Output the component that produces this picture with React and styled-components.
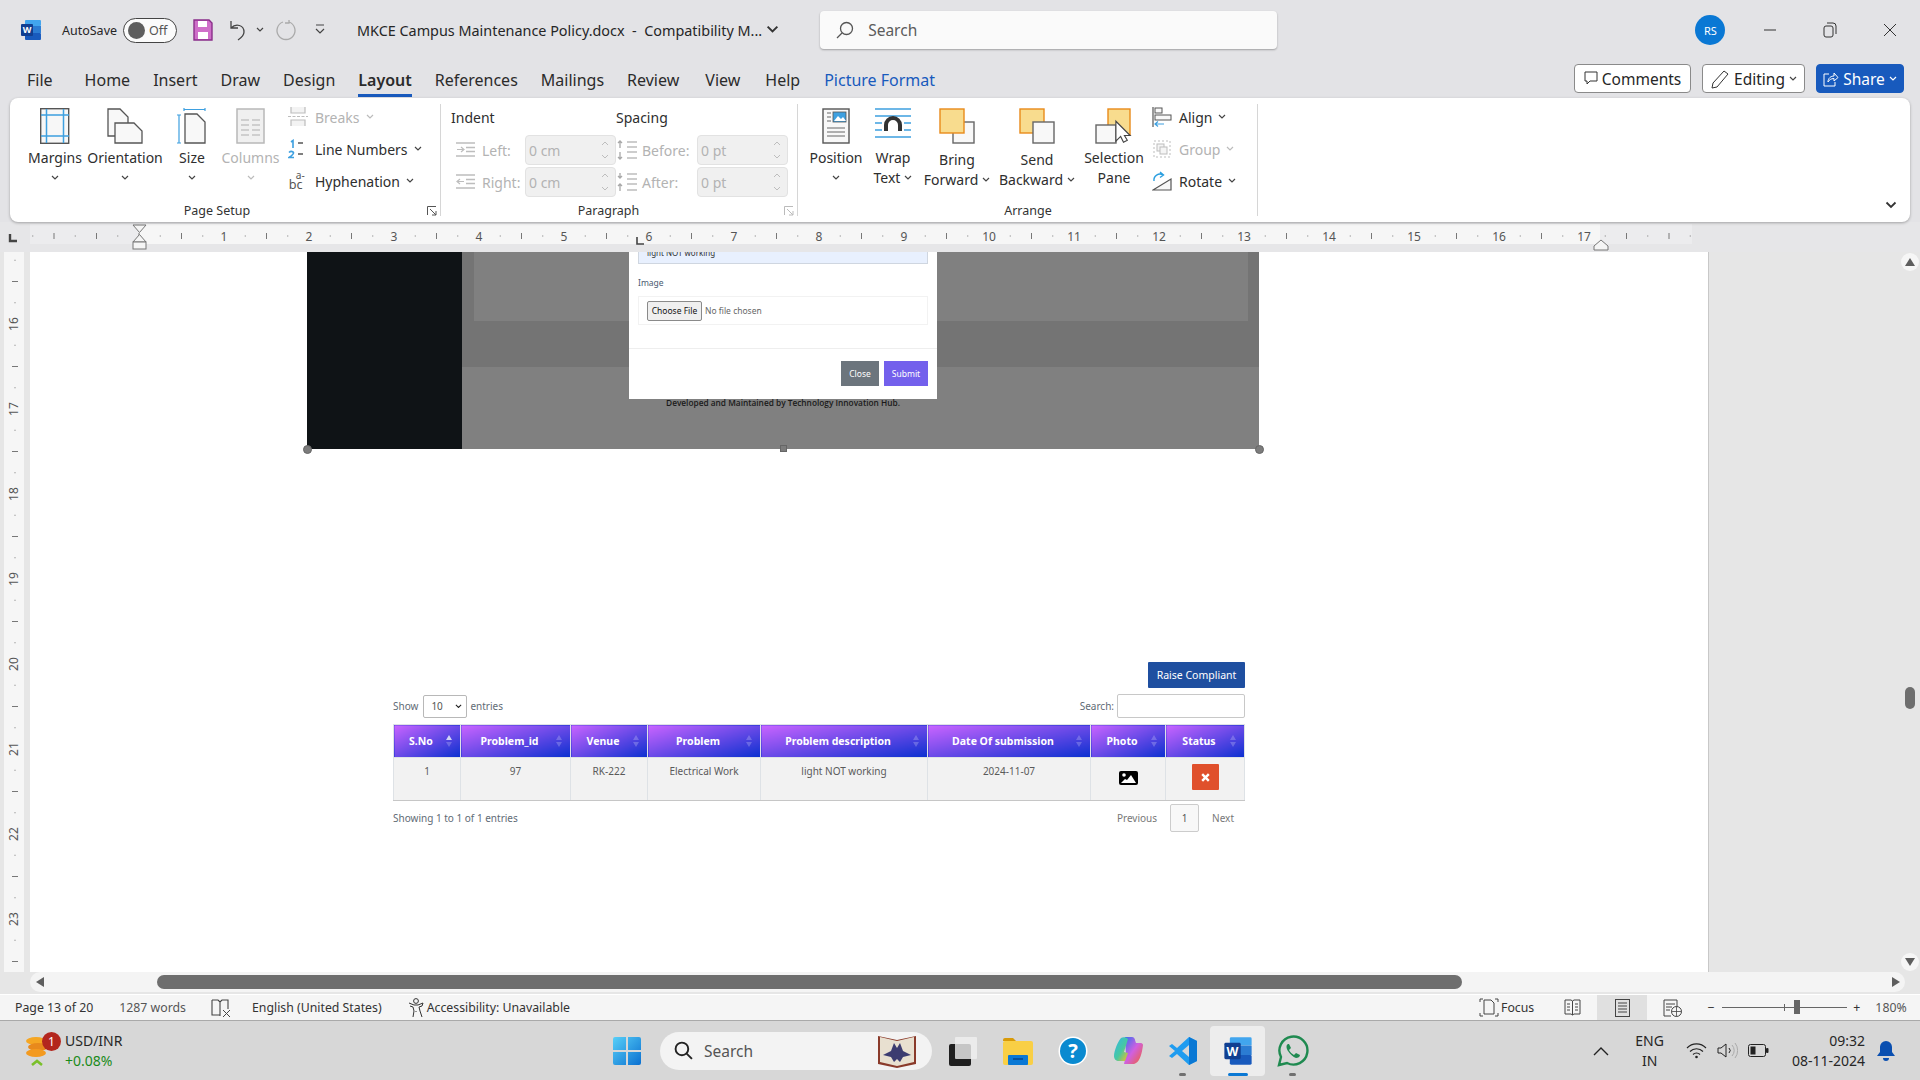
import React from 'react'
import styled, { createGlobalStyle } from 'styled-components'

const GlobalStyle = createGlobalStyle`
  html, body { margin: 0; padding: 0; background: #e3e3e6; }
  * { box-sizing: border-box; }
  #root { width: 1920px; height: 1080px; overflow: hidden; }
`

const UI = `"Noto Sans", "Open Sans", sans-serif`

const Window = styled.div`
  width: 1920px;
  height: 1080px;
  display: flex;
  flex-direction: column;
  font-family: ${UI};
  color: #262626;
  background: #e3e3e6;
`

/* ---------- title bar ---------- */
const TitleBar = styled.div`
  height: 60px;
  flex: none;
  display: flex;
  align-items: center;
  padding: 0 0 0 20px;
  position: relative;
`
const TitleItem = styled.div`
  display: flex;
  align-items: center;
  margin-left: ${p => p.$ml || 0}px;
  font-size: ${p => p.$size || 14}px;
  white-space: nowrap;
`
const Toggle = styled.div`
  width: 54px;
  height: 25px;
  border: 1px solid #444;
  border-radius: 13px;
  background: #fbfbfb;
  display: flex;
  align-items: center;
  padding-left: 4px;
  gap: 4px;
  font-size: 12.5px;
  color: #555;
  margin-left: 6px;
  &::before {
    content: '';
    width: 17px;
    height: 17px;
    border-radius: 50%;
    background: #5e5e5e;
  }
`
const SearchBox = styled.div`
  width: 458px;
  height: 38px;
  background: #fafafa;
  border-radius: 4px;
  box-shadow: 0 1px 2px rgba(0, 0, 0, .3);
  display: flex;
  align-items: center;
  gap: 14px;
  padding-left: 16px;
  font-size: 15.5px;
  color: #5c5c5c;
  margin-left: 41px;
`
const Avatar = styled.div`
  width: 30px;
  height: 30px;
  border-radius: 50%;
  background: #0a78d4;
  color: #fff;
  font-size: 11px;
  display: flex;
  align-items: center;
  justify-content: center;
  margin-left: 418px;
`
const WinBtn = styled.div`
  width: 60px;
  display: flex;
  justify-content: center;
  margin-left: ${p => p.$first ? 15 : 0}px;
`

/* ---------- tabs ---------- */
const TabRow = styled.div`
  height: 38px;
  flex: none;
  display: flex;
  align-items: flex-start;
  padding: 3px 16px 0 27px;
`
const Tab = styled.div`
  position: relative;
  height: 33px;
  line-height: 34px;
  font-size: 16px;
  margin-right: ${p => p.$mr ?? 23}px;
  color: ${p => p.$accent ? '#185abd' : '#2b2b2b'};
  font-weight: ${p => p.$active ? 600 : 400};
  ${p => p.$active && `
    &::after {
      content: '';
      position: absolute;
      left: 0;
      right: 0;
      bottom: -1px;
      height: 3px;
      background: #185abd;
    }
  `}
`
const TabActions = styled.div`
  margin-left: auto;
  display: flex;
  gap: 11px;
  padding-top: 1px;
`
const ActionBtn = styled.div`
  height: 29px;
  width: ${p => p.$w}px;
  border-radius: 4px;
  border: 1px solid ${p => p.$primary ? '#185abd' : '#8a8a8a'};
  background: ${p => p.$primary ? '#185abd' : '#fff'};
  color: ${p => p.$primary ? '#fff' : '#262626'};
  display: flex;
  align-items: center;
  justify-content: center;
  gap: 4px;
  font-size: 15.5px;
`

/* ---------- ribbon ---------- */
const Ribbon = styled.div`
  height: 124px;
  flex: none;
  margin: 0 10px;
  background: #fff;
  border-radius: 8px;
  box-shadow: 0 1px 3px rgba(0, 0, 0, .3);
  display: flex;
  position: relative;
  z-index: 2;
`
const Group = styled.div`
  width: ${p => p.$w}px;
  position: relative;
  padding: ${p => p.$pad || '0'};
  display: flex;
  align-items: flex-start;
  &::after {
    content: '';
    position: absolute;
    right: 0;
    top: 6px;
    bottom: 6px;
    width: 1px;
    background: #d6d6d6;
  }
`
const GroupLabel = styled.div`
  position: absolute;
  left: 0;
  right: ${p => p.$right ?? 0}px;
  bottom: 3px;
  text-align: center;
  font-size: 12.5px;
  color: #333;
`
const Launcher = styled.div`
  position: absolute;
  right: 4px;
  bottom: 6px;
  display: flex;
`
const LargeBtn = styled.div`
  width: ${p => p.$w}px;
  flex: none;
  display: flex;
  flex-direction: column;
  align-items: center;
  padding-top: 10px;
  color: ${p => p.$off ? '#b3b3b3' : '#2e2e2e'};
  font-size: 14px;
  line-height: 20px;
`
const IconSlot = styled.div`
  height: 37px;
  display: flex;
  align-items: flex-start;
  justify-content: center;
  margin-bottom: ${p => p.$mb ?? 3}px;
`
const LabelLine = styled.div`
  white-space: nowrap;
  height: 20px;
  display: flex;
  align-items: center;
  justify-content: center;
  gap: 4px;
`
const SmallCol = styled.div`
  display: flex;
  flex-direction: column;
  gap: 6px;
  padding-top: 6px;
  margin-left: ${p => p.$ml || 0}px;
`
const SmallBtn = styled.div`
  height: 26px;
  display: flex;
  align-items: center;
  gap: 6px;
  font-size: 14px;
  white-space: nowrap;
  color: ${p => p.$off ? '#b3b3b3' : '#2e2e2e'};
`
const SmallIcon = styled.div`
  width: 22px;
  display: flex;
  justify-content: center;
`
const ParaGrid = styled.div`
  display: grid;
  grid-template-columns: 165px 175px;
  padding: 10px 0 0 10px;
  row-gap: 2px;
`
const ParaHead = styled.div`
  font-size: 14px;
  height: 25px;
  color: #2e2e2e;
`
const ParaRow = styled.div`
  display: flex;
  align-items: center;
  height: 30px;
  color: #b3b3b3;
  font-size: 14px;
  padding-left: ${p => p.$pl ?? 5}px;
`
const ParaIcon = styled.div`
  width: 26px;
  display: flex;
`
const ParaName = styled.div`
  width: ${p => p.$w}px;
`
const Spin = styled.div`
  width: 91px;
  height: 30px;
  background: #f0f0f0;
  border: 1px solid #e2e2e2;
  border-radius: 4px;
  display: flex;
  align-items: center;
  justify-content: space-between;
  padding: 0 6px 0 3px;
  font-size: 14px;
`
const Collapse = styled.div`
  position: absolute;
  right: 13px;
  bottom: 13px;
  display: flex;
`

/* ---------- ruler ---------- */
const RulerBar = styled.div`
  height: 30px;
  flex: none;
  background: #e6e6e8;
  display: block;
`

/* ---------- document ---------- */
const DocArea = styled.div`
  height: 720px;
  flex: none;
  display: flex;
  background: #e6e6e6;
  overflow: hidden;
`
const VRuler = styled.div`
  width: 30px;
  flex: none;
  overflow: hidden;
`
const Page = styled.div`
  width: 1679px;
  flex: none;
  background: #fff;
  border-right: 1px solid #c8c8c8;
  padding-left: 277px;
`
const Gutter = styled.div`
  flex: 1;
`
const VScroll = styled.div`
  width: 20px;
  flex: none;
  position: relative;
  display: flex;
  flex-direction: column;
  justify-content: space-between;
  align-items: center;
  padding: 1px 0 1px;
`
const ScrollThumb = styled.div`
  position: absolute;
  left: 5px;
  top: 435px;
  width: 10px;
  height: 22px;
  border-radius: 5px;
  background: #6e6e6e;
`
const ArrowBtn = styled.div`
  width: 18px;
  height: 18px;
  border-radius: 50%;
  background: #f6f6f6;
  display: flex;
  align-items: center;
  justify-content: center;
`

/* picture pasted in the page */
const Picture = styled.div`
  width: 952px;
  height: 197px;
  display: flex;
  position: relative;
  background: #808080;
`
const DarkSide = styled.div`
  width: 155px;
  background: #0f1316;
  flex: none;
`
const PicMain = styled.div`
  flex: 1;
  display: flex;
  flex-direction: column;
`
const PicBand = styled.div`
  height: 115px;
  background: #747474;
  padding: 0 11px 0 12px;
`
const PicCard = styled.div`
  height: 69px;
  background: #808080;
`
const PicFoot = styled.div`
  flex: 1;
  text-align: center;
  font-size: 8.3px;
  font-weight: 600;
  color: #1a1a1a;
  padding: 30px 155px 0 0;
  font-family: "Open Sans", sans-serif;
`
const Modal = styled.div`
  position: absolute;
  left: 322px;
  top: 0;
  width: 308px;
  height: 147px;
  background: #fff;
  display: flex;
  flex-direction: column;
  padding: 0 9px;
`
const FilledInput = styled.div`
  height: 12px;
  margin-top: 0;
  background: #e8f0fe;
  border: 1px solid #cfd6e0;
  border-top: none;
  overflow: hidden;
  font-size: 8px;
  line-height: 1px;
  color: #333;
  padding-left: 8px;
`
const ModalLabel = styled.div`
  font-size: 8.5px;
  color: #4a5a70;
  margin-top: 13px;
  height: 18px;
`
const FileBox = styled.div`
  height: 29px;
  margin-top: 1px;
  border: 1px solid #f2f2f2;
  display: flex;
  align-items: center;
  padding-left: 8px;
  gap: 3px;
  font-size: 8.5px;
  color: #666;
  white-space: nowrap;
`
const ChooseBtn = styled.div`
  width: 55px;
  height: 20px;
  background: #efefef;
  border: 1px solid #8a8a8a;
  border-radius: 2px;
  color: #111;
  display: flex;
  align-items: center;
  justify-content: center;
`
const ModalFoot = styled.div`
  margin: 23px -9px 0;
  border-top: 1px solid #eee;
  padding: 12px 9px 0;
  display: flex;
  justify-content: flex-end;
  gap: 5px;
`
const ModalBtn = styled.div`
  width: ${p => p.$w}px;
  height: 25px;
  background: ${p => p.$bg};
  color: #fff;
  font-size: 8.5px;
  display: flex;
  align-items: center;
  justify-content: center;
`
const Handle = styled.div`
  position: absolute;
  top: 193px;
  left: ${p => p.$x};
  width: ${p => p.$square ? 7 : 9}px;
  height: ${p => p.$square ? 7 : 9}px;
  margin-left: ${p => p.$square ? -3 : -4}px;
  border-radius: ${p => p.$square ? '0' : '50%'};
  background: #7c7c7c;
  border: 1px solid #666;
`

/* complaints table pasted in the page */
const TableBlock = styled.div`
  width: 852px;
  margin: 213px 0 0 86px;
  font-family: "Noto Sans", sans-serif;
  font-size: 10px;
  color: #5f6b76;
`
const RaiseRow = styled.div`
  display: flex;
  justify-content: flex-end;
`
const RaiseBtn = styled.div`
  width: 97px;
  height: 26px;
  background: #1f4fa0;
  color: #fff;
  border-radius: 1px;
  display: flex;
  align-items: center;
  justify-content: center;
  font-size: 10.5px;
`
const ControlRow = styled.div`
  display: flex;
  align-items: center;
  justify-content: space-between;
  height: 24px;
  margin-top: 6px;
`
const ControlGroup = styled.div`
  display: flex;
  align-items: center;
  gap: 3px;
`
const SelectBox = styled.div`
  width: 44px;
  height: 23px;
  margin: 0 0 0 2px;
  border: 1px solid #b8b8b8;
  border-radius: 2px;
  background: #fff;
  display: flex;
  align-items: center;
  justify-content: space-between;
  padding: 0 4px 0 7px;
  color: #555;
`
const SearchInput = styled.div`
  width: 128px;
  height: 24px;
  border: 1px solid #c8c8c8;
  border-radius: 2px;
  background: #fff;
`
const DataTable = styled.table`
  width: 851px;
  border-collapse: collapse;
  table-layout: fixed;
  margin-top: 6px;
`
const Th = styled.th`
  width: ${p => p.$w}px;
  height: 33px;
  padding: 0 12px 0 0;
  background: linear-gradient(to bottom right, #c964ff, #0b30d0);
  border: 1px solid #dee2e6;
  color: #fff;
  font-size: 10.5px;
  font-weight: 700;
  position: relative;
`
const SortMark = styled.span`
  position: absolute;
  right: 8px;
  top: 10px;
  display: flex;
  flex-direction: column;
  gap: 2px;
  &::before, &::after {
    content: '';
    width: 0;
    height: 0;
    border-left: 3.5px solid transparent;
    border-right: 3.5px solid transparent;
  }
  &::before {
    border-bottom: 5px solid ${p => p.$on ? '#d0d4f5' : 'rgba(255,255,255,.22)'};
  }
  &::after {
    border-top: 5px solid rgba(255,255,255,.22);
  }
`
const Td = styled.td`
  height: 43px;
  background: #f2f2f2;
  border: 1px solid #dee2e6;
  border-bottom: 1px solid #c6c6c6;
  padding: 6px 0 0;
  vertical-align: top;
  text-align: center;
  color: #5a5a5a;
  font-size: 10px;
`
const CloseBtn = styled.div`
  width: 27px;
  height: 26px;
  margin: 0 auto;
  background: #e0502c;
  border-radius: 1px;
  display: flex;
  align-items: center;
  justify-content: center;
`
const PhotoIcon = styled.div`
  display: flex;
  justify-content: center;
  padding-top: 7px;
`
const FootRow = styled.div`
  display: flex;
  justify-content: space-between;
  align-items: center;
  margin-top: 3px;
  height: 28px;
`
const Pager = styled.div`
  display: flex;
  align-items: center;
  gap: 13px;
  padding-right: 11px;
  color: #777;
`
const PageNum = styled.div`
  width: 29px;
  height: 28px;
  border: 1px solid #ccc;
  border-radius: 2px;
  background: #f8f8f8;
  display: flex;
  align-items: center;
  justify-content: center;
  color: #555;
`

/* ---------- bottom bars ---------- */
const HScroll = styled.div`
  height: 22px;
  flex: none;
  background: #e6e6e6;
  padding: 0 15px 2px 30px;
  display: flex;
`
const HTrack = styled.div`
  flex: 1;
  border-radius: 10px;
  background: #f4f4f4;
  display: flex;
  align-items: center;
  justify-content: space-between;
  padding: 0 5px 0 6px;
  position: relative;
`
const HThumb = styled.div`
  position: absolute;
  left: 127px;
  top: 3px;
  width: 1305px;
  height: 14px;
  border-radius: 7px;
  background: #6e6e6e;
`
const StatusBar = styled.div`
  height: 27px;
  flex: none;
  background: #f5f5f5;
  border-bottom: 1px solid #a9a9a9;
  border-top: 1px solid #fff;
  display: flex;
  align-items: stretch;
  padding-left: 15px;
  font-size: 12.3px;
  color: #333;
`
const StatusItem = styled.div`
  display: flex;
  align-items: center;
  gap: ${p => p.$gap ?? 4}px;
  margin-left: ${p => p.$ml || 0}px;
  white-space: nowrap;
  color: ${p => p.$muted ? '#555' : '#333'};
`
const ViewTab = styled.div`
  width: 50px;
  display: flex;
  align-items: center;
  justify-content: center;
  background: ${p => p.$on ? '#e0e0e0' : 'transparent'};
  margin-left: ${p => p.$ml || 0}px;
`
const ZoomTrack = styled.div`
  width: 125px;
  height: 1px;
  background: #666;
  position: relative;
  &::before {
    content: '';
    position: absolute;
    left: 62px;
    top: -3px;
    width: 1px;
    height: 7px;
    background: #666;
  }
  &::after {
    content: '';
    position: absolute;
    left: 72px;
    top: -7px;
    width: 6px;
    height: 14px;
    background: #666;
  }
`
const Taskbar = styled.div`
  height: 59px;
  flex: none;
  background: #d7d7d7;
  display: flex;
  align-items: center;
  position: relative;
`
const Widget = styled.div`
  width: 612px;
  flex: none;
  display: flex;
  align-items: center;
  padding-left: 25px;
  gap: 4px;
`
const WidgetIcon = styled.div`
  position: relative;
  width: 36px;
  height: 38px;
`
const Badge = styled.div`
  position: absolute;
  right: 0;
  top: 0;
  width: 19px;
  height: 19px;
  border-radius: 50%;
  background: #b3261e;
  color: #fff;
  font-size: 12px;
  display: flex;
  align-items: center;
  justify-content: center;
`
const WidgetText = styled.div`
  font-size: 14px;
  line-height: 20px;
`
const WidgetDelta = styled.div`
  color: #1a8a1a;
`
const Pill = styled.div`
  width: 272px;
  height: 38px;
  border-radius: 19px;
  background: #f3f3f3;
  display: flex;
  align-items: center;
  padding: 0 15px 0 14px;
  gap: 11px;
  font-size: 15.5px;
  color: #555;
  margin-left: 18px;
`
const PillBook = styled.div`
  margin-left: auto;
  display: flex;
`
const AppSlot = styled.div`
  width: ${p => p.$w || 55}px;
  height: 50px;
  flex: none;
  position: relative;
  display: flex;
  align-items: center;
  justify-content: center;
  border-radius: 4px;
  background: ${p => p.$active ? '#ededed' : 'transparent'};
  margin-left: ${p => p.$ml || 0}px;
`
const RunDot = styled.div`
  position: absolute;
  bottom: 0;
  left: 50%;
  width: ${p => p.$on ? 20 : 7}px;
  height: 3px;
  margin-left: ${p => p.$on ? -10 : -3.5}px;
  border-radius: 2px;
  background: ${p => p.$on ? '#0a78d4' : '#707070'};
`
const Tray = styled.div`
  margin-left: auto;
  display: flex;
  align-items: center;
  padding-right: 25px;
`
const Lang = styled.div`
  text-align: center;
  font-size: 14px;
  line-height: 20px;
  margin-left: 26px;
`
const TrayIcons = styled.div`
  display: flex;
  align-items: center;
  gap: 10px;
  margin-left: 22px;
`
const Clock = styled.div`
  text-align: right;
  font-size: 14px;
  line-height: 20px;
  margin-left: 23px;
`
const Bell = styled.div`
  margin-left: 12px;
  display: flex;
`

/* ---------- icons ---------- */
const Chev = ({ c = '#444', s = 8 }) => (
  <svg width={s} height={s * .7} viewBox="0 0 8 5.6"><path d="M1 1l3 3 3-3" fill="none" stroke={c} strokeWidth="1.2" /></svg>
)
const DocGlyph = ({ x, y, w, h, fold = 8, stroke = '#555' }) => (
  <path d={`M${x} ${y}h${w - fold}l${fold} ${fold}v${h - fold}h${-w}z`} fill="#f8f8f8" stroke={stroke} strokeWidth="1.3" />
)
const MarginsIcon = () => (
  <svg width="30" height="36" viewBox="0 0 30 36">
    <rect x=".7" y=".7" width="28" height="34.6" fill="#f7f7f7" stroke="#555" strokeWidth="1.4" />
    <path d="M1 7h28M1 28h28M6.5 1v34M23.5 1v34" stroke="#3ea0e0" strokeWidth="1.5" />
  </svg>
)
const OrientationIcon = () => (
  <svg width="36" height="36" viewBox="0 0 36 36">
    <DocGlyph x={1} y={1} w={20} h={27} />
    <DocGlyph x={8} y={15} w={27} h={20} />
  </svg>
)
const SizeIcon = () => (
  <svg width="30" height="36" viewBox="0 0 30 36">
    <DocGlyph x={8} y={6} w={20} h={29} />
    <path d="M7 1.5h21M7 0v3M28 0v3M2 7v28M0 7h4M0 35h4" stroke="#3ea0e0" strokeWidth="1.2" fill="none" />
  </svg>
)
const ColumnsIcon = () => (
  <svg width="29" height="36" viewBox="0 0 29 36">
    <rect x="1" y="1" width="27" height="34" fill="#f0f0f0" stroke="#b8b8b8" strokeWidth="1.5" />
    <path d="M5 12h8M16 12h8M5 17h8M16 17h8M5 22h8M16 22h8M5 27h8M16 27h8" stroke="#c4c4c4" strokeWidth="1.3" />
  </svg>
)
const BreaksIcon = () => (
  <svg width="20" height="20" viewBox="0 0 20 20">
    <path d="M3 0v6h14V0M3 19v-6h14v6" fill="#f3f3f3" stroke="#bdbdbd" strokeWidth="1.2" />
    <path d="M0 9.5h20" stroke="#bdbdbd" strokeWidth="1.2" strokeDasharray="3 1.5" />
  </svg>
)
const LineNumIcon = () => (
  <svg width="20" height="20" viewBox="0 0 20 20">
    <path d="M3 3l2-1.5V9M1 13.500q2-2 4-.5t-4 5.500h5" fill="none" stroke="#3ea0e0" strokeWidth="1.6" />
    <path d="M10 4h5M10 15h5" stroke="#555" strokeWidth="1.4" />
  </svg>
)
const HyphenIcon = () => (
  <svg width="26" height="34" viewBox="-2 -6 26 34">
    <text x="19" y="9" textAnchor="end" fontSize="12" fill="#555" fontFamily="Noto Sans">a-</text>
    <text x="0" y="20" fontSize="15" fill="#555" fontFamily="Noto Sans">bc</text>
  </svg>
)
const LauncherIcon = ({ c = '#555' }) => (
  <svg width="10" height="10" viewBox="0 0 10 10">
    <path d="M.5 9V.5H9" fill="none" stroke={c} />
    <path d="M3 3l6 6M9 5v4H5" fill="none" stroke={c} />
  </svg>
)
const LinesIcon = ({ arrow = 'in' }) => (
  <svg width="20" height="17" viewBox="0 0 20 17">
    <path d="M0 1h19M10 5.500h9M10 9.500h9M0 14h19" stroke="#bdbdbd" strokeWidth="1.4" />
    <path d={arrow === 'in' ? 'M1 7.500h6M5 5l3 2.500L5 10' : 'M8 7.500H2M4 5L1 7.500 4 10'} stroke="#bdbdbd" strokeWidth="1.2" fill="none" />
  </svg>
)
const SpacingIcon = ({ after }) => (
  <svg width="22" height="20" viewBox="0 0 22 20">
    <path d="M11 2h10M11 7h10M11 12h10M11 18h10" stroke="#bdbdbd" strokeWidth="1.4" />
    <path d={after ? 'M4 1v5M2 4l2 2 2-2M4 19v-7M2 14l2-2 2 2' : 'M4 1v7M2 3l2-2 2 2M4 12v7M2 17l2 2 2-2'} stroke="#a8a8a8" strokeWidth="1.3" fill="none" />
  </svg>
)
const SpinArrows = () => (
  <svg width="8" height="20" viewBox="0 0 8 20">
    <path d="M1 5l3-3 3 3M1 15l3 3 3-3" fill="none" stroke="#bdbdbd" />
  </svg>
)
const PositionIcon = () => (
  <svg width="28" height="36" viewBox="0 0 28 36">
    <rect x="1" y="1" width="26" height="34" fill="#f8f8f8" stroke="#555" strokeWidth="1.4" />
    <path d="M5 5h4M5 9h4M5 13h4M5 20h18M5 24h18M5 28h18" stroke="#666" />
    <rect x="11" y="4" width="13" height="10" fill="#3ea0e0" stroke="#555" strokeWidth=".8" />
    <path d="M12 13l4-5 3 3 2-2 3 4z" fill="#fff" />
  </svg>
)
const WrapIcon = () => (
  <svg width="36" height="30" viewBox="0 0 36 30">
    <path d="M0 1h36M0 8h36M0 15h7M29 15h7M0 22h7M29 22h7M0 29h36" stroke="#3ea0e0" strokeWidth="1.3" />
    <path d="M9 23v-6a9 9 0 0 1 18 0v6h-4v-6a5 5 0 0 0-10 0v6z" fill="#333" />
  </svg>
)
const ArrangeIcon = ({ front, grey = '#666' }) => (
  <svg width="36" height="36" viewBox="0 0 36 36">
    {!front && <rect x="1" y="1" width="24" height="24" fill="#f8dc8e" stroke="#e88a1a" strokeWidth="1.4" />}
    <rect x="14" y="14" width="21" height="21" fill="#f8f8f8" stroke={grey} strokeWidth="1.4" />
    {front && <rect x="1" y="1" width="24" height="24" fill="#f8dc8e" stroke="#e88a1a" strokeWidth="1.4" />}
  </svg>
)
const SelectionIcon = () => (
  <svg width="38" height="38" viewBox="0 0 38 38">
    <rect x="13" y="1" width="22" height="26" fill="#f8dc8e" stroke="#e88a1a" strokeWidth="1.4" />
    <rect x="1" y="17" width="20" height="18" fill="#f8f8f8" stroke="#666" strokeWidth="1.4" />
    <path d="M22 15v21l5-5 3 6 4-2-3-5h6z" fill="#fff" stroke="#444" strokeWidth="1.2" transform="translate(0 -1) scale(.95)" />
  </svg>
)
const AlignIcon = () => (
  <svg width="20" height="20" viewBox="0 0 20 20">
    <path d="M1 0v20" stroke="#555" strokeWidth="1.2" />
    <rect x="3" y="1" width="7" height="5" fill="#f8f8f8" stroke="#555" />
    <rect x="3" y="8" width="16" height="5" fill="#f8f8f8" stroke="#555" />
    <path d="M3 17h9M6 14.500L3 17l3 2.500" stroke="#3ea0e0" strokeWidth="1.2" fill="none" />
  </svg>
)
const GroupIcon = () => (
  <svg width="20" height="20" viewBox="0 0 20 20">
    <rect x="2" y="2" width="16" height="16" fill="none" stroke="#bdbdbd" strokeDasharray="2 2" />
    <rect x="5" y="5" width="7" height="7" fill="#f5f5f5" stroke="#bdbdbd" />
    <rect x="8" y="8" width="7" height="7" fill="#f5f5f5" stroke="#bdbdbd" />
  </svg>
)
const RotateIcon = () => (
  <svg width="20" height="20" viewBox="0 0 20 20">
    <path d="M1 19L19 8v11z" fill="#f8f8f8" stroke="#555" strokeWidth="1.2" />
    <path d="M2 10a6 6 0 0 1 9-6M8 1l3.500 3L8 6.500" fill="none" stroke="#2b9fe0" strokeWidth="1.4" />
  </svg>
)
const WordLogo = ({ s = 22 }) => (
  <svg width={s} height={s} viewBox="0 0 22 22">
    <rect x="5" y="1" width="16" height="6" rx="1" fill="#41a5ee" />
    <rect x="5" y="7" width="16" height="7" fill="#2b7cd3" />
    <rect x="5" y="14" width="16" height="7" rx="1" fill="#185abd" />
    <rect x="1" y="5" width="12" height="12" rx="1" fill="#103f91" />
    <text x="7" y="14.500" textAnchor="middle" fontSize="9" fontWeight="700" fill="#fff" fontFamily="Noto Sans">W</text>
  </svg>
)
const SaveIcon = () => (
  <svg width="20" height="22" viewBox="0 0 20 22">
    <path d="M1 1h15l3 3v17H1z" fill="#cf6fc9" stroke="#8a2f8a" strokeWidth="1.4" />
    <rect x="5" y="2" width="9" height="6" fill="#fff" />
    <rect x="5" y="13" width="10" height="7" fill="#fff" />
  </svg>
)
const UndoIcon = () => (
  <svg width="20" height="22" viewBox="0 0 20 22">
    <path d="M3 2v7h7M3 9c5-5 13-3 13 4 0 4-3 6-6 8" fill="none" stroke="#444" strokeWidth="1.3" />
  </svg>
)
const RedoIcon = () => (
  <svg width="22" height="22" viewBox="0 0 22 22">
    <path d="M8 3a9 9 0 1 0 6 0M14 1v3h-4" fill="none" stroke="#aaa" strokeWidth="1.3" />
  </svg>
)
const QatIcon = () => (
  <svg width="10" height="12" viewBox="0 0 10 12">
    <path d="M1 1h8M1 5l4 4 4-4" fill="none" stroke="#444" strokeWidth="1.2" />
  </svg>
)
const SearchGlass = ({ s = 18, c = '#444', flip, w = 1.3 }) => (
  <svg width={s} height={s} viewBox="0 0 18 18">
    <g transform={flip ? 'translate(18 0) scale(-1 1)' : undefined}>
      <circle cx="7.500" cy="7.500" r="6" fill="none" stroke={c} strokeWidth={w} />
      <path d="M12 12l5 5" stroke={c} strokeWidth={w} />
    </g>
  </svg>
)
const CommentIcon = () => (
  <svg width="14" height="15" viewBox="0 0 14 15">
    <path d="M1 1h12v9H6l-3 3v-3H1z" fill="none" stroke="#333" />
  </svg>
)
const PenIcon = () => (
  <svg width="20" height="20" viewBox="0 0 20 20">
    <path d="M14 2l4 3L7 18l-5 1 1-5z" fill="none" stroke="#333" />
  </svg>
)
const ShareIcon = () => (
  <svg width="16" height="16" viewBox="0 0 16 16">
    <path d="M6 3H1v12h11v-4" fill="none" stroke="#fff" />
    <path d="M5 11c0-4 3-6 6-6V2l4 4.500L11 10V7.500C8 7.500 6 9 5 11z" fill="none" stroke="#fff" />
  </svg>
)
const Ruler = () => {
  const ticks = []
  for (let q = -5; q <= 73; q++) {
    const x = 139 + q * 21.25
    if (x < 28 || x > 1692) continue
    const m = ((q % 4) + 4) % 4
    if (m === 0 && q > 0 && q / 4 <= 17) {
      ticks.push(<text key={q} x={x} y="18.500" textAnchor="middle" fontSize="12" fill="#555" fontFamily="Noto Sans">{q / 4}</text>)
    } else if (m === 2 || m === 0) {
      ticks.push(<path key={q} d={`M${x} 11v6`} stroke="#777" />)
    } else {
      ticks.push(<path key={q} d={`M${x} 13.500v1`} stroke="#777" />)
    }
  }
  return (
    <svg width="1920" height="30" viewBox="0 0 1920 30" style={{ display: 'block' }}>
      <rect x="30" y="2" width="109" height="20" fill="#ececee" />
      <rect x="139" y="2" width="1461" height="20" fill="#f6f6f6" />
      <rect x="1600" y="2" width="92" height="20" fill="#ececee" />
      {ticks}
      <path d="M10 12v7h7" fill="none" stroke="#444" strokeWidth="2.400" />
      <path d="M133 3h13l-6.500 7.500zM146 20h-13l6.500-7.500z" fill="#f5f5f5" stroke="#777" />
      <rect x="133" y="20" width="13" height="7" fill="#f5f5f5" stroke="#777" />
      <path d="M637 15v7h7" fill="none" stroke="#444" strokeWidth="1.600" />
      <path d="M1594 28v-4l7-6 7 6v4z" fill="#f5f5f5" stroke="#777" />
    </svg>
  )
}
const VerticalRuler = () => {
  const marks = []
  for (let q = 1; q <= 34; q++) {
    const y = -13 + q * 21.25
    const m = q % 4
    if (m === 0) {
      marks.push(<text key={q} x="15" y={y} transform={`rotate(-90 15 ${y})`} textAnchor="middle" dominantBaseline="middle" fontSize="12" fill="#555" fontFamily="Noto Sans">{15 + q / 4}</text>)
    } else if (m === 2) {
      marks.push(<path key={q} d={`M12 ${y}h6`} stroke="#777" />)
    } else {
      marks.push(<path key={q} d={`M14.500 ${y}h1`} stroke="#777" />)
    }
  }
  return (
    <svg width="30" height="720" viewBox="0 0 30 720" style={{ display: 'block' }}>
      <rect x="4" width="20" height="720" fill="#f6f6f6" />
      {marks}
    </svg>
  )
}
const Tri = ({ dir }) => {
  const d = { up: 'M0 8l5-8 5 8z', down: 'M0 0l5 8 5-8z', left: 'M8 0v10L0 5z', right: 'M0 0v10l8-5z' }[dir]
  const wide = dir === 'up' || dir === 'down'
  return (
    <svg width={wide ? 10 : 8} height={wide ? 8 : 10} viewBox={wide ? '0 0 10 8' : '0 0 8 10'}><path d={d} fill="#5e5e5e" /></svg>
  )
}
const ProofIcon = () => (
  <svg width="20" height="20" viewBox="0 0 20 20">
    <path d="M1 2h6l2 2 2-2h6v9M9 4v14M1 2v15h8" fill="none" stroke="#444" strokeWidth="1.100" />
    <path d="M12 12l7 7M19 12l-7 7" stroke="#444" />
  </svg>
)
const AccIcon = () => (
  <svg width="18" height="20" viewBox="0 0 18 20">
    <circle cx="8" cy="3" r="2.400" fill="none" stroke="#333" />
    <path d="M1 5l5 2h4l5-2-1 3-3 1 1 4 2 6M5 19l1-6-1-4-3-1M8 13v1" fill="none" stroke="#333" />
  </svg>
)
const FocusIcon = () => (
  <svg width="20" height="19" viewBox="0 0 20 19">
    <path d="M1 4V1h3M16 1h3v3M1 15v3h3M16 18h3v-3" fill="none" stroke="#444" />
    <path d="M5 2h7l3 3v11H5z" fill="none" stroke="#444" />
  </svg>
)
const ReadIcon = () => (
  <svg width="17" height="17" viewBox="0 0 17 17">
    <path d="M1 1h6l1.500 1L10 1h6v14h-6l-1.500 1L7 15H1zM8.500 2v14" fill="none" stroke="#444" />
    <path d="M3 5h3M3 8h3M3 11h3M11 5h3M11 8h3M11 11h3" stroke="#444" />
  </svg>
)
const PrintIcon = () => (
  <svg width="15" height="18" viewBox="0 0 15 18">
    <rect x=".5" y=".5" width="14" height="17" fill="none" stroke="#444" />
    <path d="M3 4h9M3 7h9M3 10h9M3 13h9" stroke="#444" />
  </svg>
)
const WebIcon = () => (
  <svg width="19" height="18" viewBox="0 0 19 18">
    <path d="M8 17H1V1h13v7M3 5h9M3 8h6M3 11h4" fill="none" stroke="#444" />
    <circle cx="13.500" cy="12.500" r="5" fill="#f5f5f5" stroke="#444" />
    <path d="M8.500 12.500h10M13.500 7.500v10" stroke="#444" strokeWidth=".8" />
  </svg>
)
const CoinsIcon = () => (
  <svg width="26" height="36" viewBox="0 0 26 36">
    <ellipse cx="11" cy="9" rx="10" ry="4" fill="#f5a623" />
    <ellipse cx="13" cy="15" rx="10" ry="4" fill="#e8891c" />
    <ellipse cx="11" cy="21" rx="10" ry="4" fill="#f39a1f" />
    <path d="M7 33l5-4 5 4" fill="none" stroke="#7ac02a" strokeWidth="2.600" />
  </svg>
)
const WindowsLogo = () => (
  <svg width="30" height="30" viewBox="0 0 30 30">
    <defs>
      <linearGradient id="win" x1="0" y1="0" x2="1" y2="1">
        <stop offset="0" stopColor="#58d0f8" />
        <stop offset="1" stopColor="#0a6fd0" />
      </linearGradient>
    </defs>
    <path d="M1 3a2 2 0 0 1 2-2h11v13H1zM16 1h11a2 2 0 0 1 2 2v11H16zM1 16h13v13H3a2 2 0 0 1-2-2zM16 16h13v11a2 2 0 0 1-2 2H16z" fill="url(#win)" />
  </svg>
)
const BookIcon = () => (
  <svg width="40" height="36" viewBox="0 0 40 36">
    <path d="M1 3l19 4 19-4v28l-19 4-19-4z" fill="#8a3a2a" />
    <path d="M3 4l17 4 17-4v25l-17 4-17-4z" fill="#e8e0d0" />
    <path d="M6 22l8-4 3-8 3 5 3-5 3 8 8 4-8 2-3 5-3-3-3 3-3-5z" fill="#3c3c70" />
  </svg>
)
const AppSquare = () => (
  <svg width="30" height="30" viewBox="0 0 30 30">
    <rect x="1" y="8" width="22" height="22" rx="2" fill="#1f1f1f" />
    <rect x="7" y="1" width="22" height="22" rx="1" fill="#f0f0f0" opacity=".8" />
  </svg>
)
const FolderIcon = () => (
  <svg width="30" height="30" viewBox="0 0 30 30">
    <path d="M0 4a2 2 0 0 1 2-2h8l3 3h-13z" fill="#d89a08" />
    <rect y="5" width="30" height="24" rx="2" fill="#f9cf45" />
    <rect x="5" y="19" width="20" height="10" rx="1" fill="#0a78d4" />
    <path d="M10 23h10" stroke="#063e80" strokeWidth="1.300" />
  </svg>
)
const HelpIcon = () => (
  <svg width="30" height="30" viewBox="0 0 30 30">
    <circle cx="15" cy="15" r="14.500" fill="#fff" />
    <circle cx="15" cy="15" r="13" fill="#0a8ad0" />
    <text x="15" y="22" textAnchor="middle" fontSize="20" fontWeight="700" fill="#fff" fontFamily="Noto Sans">?</text>
  </svg>
)
const CopilotIcon = () => (
  <svg width="30" height="30" viewBox="0 0 30 30">
    <defs>
      <linearGradient id="cp1" x1="0" y1="0" x2="1" y2="1">
        <stop offset="0" stopColor="#2fb8e8" />
        <stop offset=".55" stopColor="#48c8a0" />
        <stop offset="1" stopColor="#f8c020" />
      </linearGradient>
      <linearGradient id="cp2" x1="0" y1="0" x2="1" y2="1">
        <stop offset="0" stopColor="#3070f0" />
        <stop offset=".5" stopColor="#d060e0" />
        <stop offset="1" stopColor="#f06030" />
      </linearGradient>
    </defs>
    <path d="M12 1h7c2 0 3 2 3 3l1 3h5c1 0 2 1 2 2-1 8-3 16-7 18-1 1-3 1-4 1h-8l2-9z" fill="url(#cp2)" />
    <path d="M8 2c-3 3-7 13-7 18 0 3 2 5 5 5h6l3-8-4-1 4-13c-2-2-5-2-7-1z" fill="url(#cp1)" />
  </svg>
)
const VSCodeIcon = () => (
  <svg width="30" height="30" viewBox="0 0 30 30">
    <path d="M21 1l8 4v20l-8 4-12-11-5 4-3-2 6-5-6-5 3-2 5 4z" fill="#1f9cf0" />
    <path d="M21 1l8 4v20l-8 4z" fill="#0a78d4" />
    <path d="M21 9l-7 6 7 6z" fill="#d7d7d7" />
  </svg>
)
const WhatsAppIcon = () => (
  <svg width="32" height="32" viewBox="0 0 32 32">
    <path d="M2 30l2-8a14 14 0 1 1 6 6z" fill="none" stroke="#1f8a50" strokeWidth="2.400" />
    <path d="M11 9c-2 1-2 4 0 7s5 6 8 7c2 0 4-1 4-3l-4-2-2 2c-2-1-4-3-5-5l2-2-2-4z" fill="#1f8a50" />
  </svg>
)
const WifiIcon = () => (
  <svg width="21" height="17" viewBox="0 0 21 17">
    <path d="M1 6a13 13 0 0 1 19 0M4 9.500a9 9 0 0 1 13 0M7 12.500a5 5 0 0 1 7 0" fill="none" stroke="#222" strokeWidth="1.100" />
    <circle cx="10.500" cy="15" r="1.300" fill="#222" />
  </svg>
)
const VolumeIcon = () => (
  <svg width="21" height="17" viewBox="0 0 21 17">
    <path d="M1 6h3l5-4v13l-5-4H1z" fill="none" stroke="#222" />
    <path d="M12 6a3.500 3.500 0 0 1 0 5" fill="none" stroke="#222" />
    <path d="M15 3a8 8 0 0 1 0 11M18 1a12 12 0 0 1 0 15" fill="none" stroke="#aaa" />
  </svg>
)
const BatteryIcon = () => (
  <svg width="21" height="13" viewBox="0 0 21 13">
    <rect x=".5" y=".5" width="17" height="12" rx="2" fill="none" stroke="#222" />
    <rect x="2.500" y="2.500" width="5" height="8" fill="#222" />
    <rect x="18" y="4" width="2.500" height="5" rx="1" fill="#222" />
  </svg>
)
const BellIcon = () => (
  <svg width="18" height="20" viewBox="0 0 18 20">
    <path d="M9 0a6 6 0 0 0-6 6v5l-3 4h18l-3-4V6a6 6 0 0 0-6-6zM6 17a3 3 0 0 0 6 0z" fill="#0a4fb0" />
  </svg>
)

const columns = [
  ['S.No', 67, true], ['Problem_id', 110], ['Venue', 77], ['Problem', 113],
  ['Problem description', 167], ['Date Of submission', 163], ['Photo', 75], ['Status', 79],
]
const tabs = [
  ['File', 32], ['Home'], ['Insert'], ['Draw'], ['Design'], ['Layout', 23, true],
  ['References'], ['Mailings'], ['Review', 26], ['View', 25], ['Help', 24],
]

export default function App() {
  return (
    <Window>
      <GlobalStyle />
      <TitleBar>
        <WordLogo />
        <TitleItem $ml={20} $size={12.5}>AutoSave</TitleItem>
        <Toggle>Off</Toggle>
        <TitleItem $ml={16}><SaveIcon /></TitleItem>
        <TitleItem $ml={15}><UndoIcon /></TitleItem>
        <TitleItem $ml={8}><Chev /></TitleItem>
        <TitleItem $ml={11}><RedoIcon /></TitleItem>
        <TitleItem $ml={18}><QatIcon /></TitleItem>
        <TitleItem $ml={32} $size={14.4}>MKCE Campus Maintenance Policy.docx&nbsp; - &nbsp;Compatibility M...</TitleItem>
        <TitleItem $ml={4}><Chev s={13} c="#333" /></TitleItem>
        <SearchBox><SearchGlass flip c="#555" />Search</SearchBox>
        <Avatar>RS</Avatar>
        <WinBtn $first><svg width="12" height="2"><path d="M0 1h12" stroke="#333" /></svg></WinBtn>
        <WinBtn>
          <svg width="14" height="16" viewBox="0 0 14 16"><rect x="1" y="4" width="9" height="11" rx="2" fill="none" stroke="#333" /><path d="M4 1h6a3 3 0 0 1 3 3v8" fill="none" stroke="#333" /></svg>
        </WinBtn>
        <WinBtn><svg width="14" height="14" viewBox="0 0 14 14"><path d="M1 1l12 12M13 1L1 13" stroke="#333" /></svg></WinBtn>
      </TitleBar>

      <TabRow>
        {tabs.map(([t, mr, active]) => <Tab key={t} $mr={mr} $active={active}>{t}</Tab>)}
        <Tab $accent $mr={0}>Picture Format</Tab>
        <TabActions>
          <ActionBtn $w={117}><CommentIcon />Comments</ActionBtn>
          <ActionBtn $w={103}><PenIcon />Editing <Chev /></ActionBtn>
          <ActionBtn $w={88} $primary><ShareIcon />Share <Chev c="#fff" /></ActionBtn>
        </TabActions>
      </TabRow>

      <Ribbon>
        <Group $w={431} $pad="0 0 0 14px">
          <LargeBtn $w={62}><IconSlot><MarginsIcon /></IconSlot><LabelLine>Margins</LabelLine><LabelLine><Chev /></LabelLine></LargeBtn>
          <LargeBtn $w={78}><IconSlot><OrientationIcon /></IconSlot><LabelLine>Orientation</LabelLine><LabelLine><Chev /></LabelLine></LargeBtn>
          <LargeBtn $w={56}><IconSlot><SizeIcon /></IconSlot><LabelLine>Size</LabelLine><LabelLine><Chev /></LabelLine></LargeBtn>
          <LargeBtn $w={61} $off><IconSlot><ColumnsIcon /></IconSlot><LabelLine>Columns</LabelLine><LabelLine><Chev c="#bbb" /></LabelLine></LargeBtn>
          <SmallCol $ml={6}>
            <SmallBtn $off><SmallIcon><BreaksIcon /></SmallIcon>Breaks <Chev c="#bbb" /></SmallBtn>
            <SmallBtn><SmallIcon><LineNumIcon /></SmallIcon>Line Numbers <Chev /></SmallBtn>
            <SmallBtn><SmallIcon><HyphenIcon /></SmallIcon>Hyphenation <Chev /></SmallBtn>
          </SmallCol>
          <GroupLabel $right={17}>Page Setup</GroupLabel>
          <Launcher><LauncherIcon /></Launcher>
        </Group>
        <Group $w={357}>
          <ParaGrid>
            <ParaHead>Indent</ParaHead>
            <ParaHead>Spacing</ParaHead>
            <ParaRow><ParaIcon><LinesIcon /></ParaIcon><ParaName $w={43}>Left:</ParaName><Spin>0 cm<SpinArrows /></Spin></ParaRow>
            <ParaRow $pl={0}><ParaIcon><SpacingIcon /></ParaIcon><ParaName $w={55}>Before:</ParaName><Spin>0 pt<SpinArrows /></Spin></ParaRow>
            <ParaRow><ParaIcon><LinesIcon arrow="out" /></ParaIcon><ParaName $w={43}>Right:</ParaName><Spin>0 cm<SpinArrows /></Spin></ParaRow>
            <ParaRow $pl={0}><ParaIcon><SpacingIcon after /></ParaIcon><ParaName $w={55}>After:</ParaName><Spin>0 pt<SpinArrows /></Spin></ParaRow>
          </ParaGrid>
          <GroupLabel $right={22}>Paragraph</GroupLabel>
          <Launcher><LauncherIcon c="#bbb" /></Launcher>
        </Group>
        <Group $w={460} $pad="0 0 0 9px">
          <LargeBtn $w={58}><IconSlot><PositionIcon /></IconSlot><LabelLine>Position</LabelLine><LabelLine><Chev /></LabelLine></LargeBtn>
          <LargeBtn $w={56}><IconSlot><WrapIcon /></IconSlot><LabelLine>Wrap</LabelLine><LabelLine>Text <Chev /></LabelLine></LargeBtn>
          <LargeBtn $w={72}><IconSlot $mb={5}><ArrangeIcon front /></IconSlot><LabelLine>Bring</LabelLine><LabelLine>Forward <Chev /></LabelLine></LargeBtn>
          <LargeBtn $w={88}><IconSlot $mb={5}><ArrangeIcon /></IconSlot><LabelLine>Send</LabelLine><LabelLine>Backward <Chev /></LabelLine></LargeBtn>
          <LargeBtn $w={66}><IconSlot><SelectionIcon /></IconSlot><LabelLine>Selection</LabelLine><LabelLine>Pane</LabelLine></LargeBtn>
          <SmallCol $ml={4}>
            <SmallBtn><SmallIcon><AlignIcon /></SmallIcon>Align <Chev /></SmallBtn>
            <SmallBtn $off><SmallIcon><GroupIcon /></SmallIcon>Group <Chev c="#bbb" /></SmallBtn>
            <SmallBtn><SmallIcon><RotateIcon /></SmallIcon>Rotate <Chev /></SmallBtn>
          </SmallCol>
          <GroupLabel>Arrange</GroupLabel>
        </Group>
        <Collapse><Chev s={12} c="#333" /></Collapse>
      </Ribbon>

      <RulerBar><Ruler /></RulerBar>

      <DocArea>
        <VRuler><VerticalRuler /></VRuler>
        <Page>
          <Picture>
            <DarkSide />
            <PicMain>
              <PicBand><PicCard /></PicBand>
              <PicFoot>Developed and Maintained by Technology Innovation Hub.</PicFoot>
            </PicMain>
            <Modal>
              <FilledInput>light NOT working</FilledInput>
              <ModalLabel>Image</ModalLabel>
              <FileBox><ChooseBtn>Choose File</ChooseBtn>No file chosen</FileBox>
              <ModalFoot>
                <ModalBtn $w={38} $bg="#6c757d">Close</ModalBtn>
                <ModalBtn $w={44} $bg="#7360ec">Submit</ModalBtn>
              </ModalFoot>
            </Modal>
            <Handle $x="0" />
            <Handle $x="476px" $square />
            <Handle $x="952px" />
          </Picture>
          <TableBlock>
            <RaiseRow><RaiseBtn>Raise Compliant</RaiseBtn></RaiseRow>
            <ControlRow>
              <ControlGroup>Show <SelectBox>10 <Chev c="#222" s={7} /></SelectBox> entries</ControlGroup>
              <ControlGroup>Search: <SearchInput /></ControlGroup>
            </ControlRow>
            <DataTable>
              <thead>
                <tr>
                  {columns.map(([name, w, on]) => <Th key={name} $w={w}>{name}<SortMark $on={on} /></Th>)}
                </tr>
              </thead>
              <tbody>
                <tr>
                  <Td>1</Td>
                  <Td>97</Td>
                  <Td>RK-222</Td>
                  <Td>Electrical Work</Td>
                  <Td>light NOT working</Td>
                  <Td>2024-11-07</Td>
                  <Td>
                    <PhotoIcon>
                      <svg width="19" height="14" viewBox="0 0 19 14">
                        <rect width="19" height="14" rx="2" fill="#000" />
                        <circle cx="5" cy="4" r="1.800" fill="#fff" />
                        <path d="M2 12l4-4 2 1 4-5 5 8z" fill="#fff" />
                      </svg>
                    </PhotoIcon>
                  </Td>
                  <Td>
                    <CloseBtn>
                      <svg width="9" height="9" viewBox="0 0 9 9"><path d="M1.200 1.200l6.600 6.600M7.800 1.200L1.200 7.800" stroke="#fff" strokeWidth="2.400" /></svg>
                    </CloseBtn>
                  </Td>
                </tr>
              </tbody>
            </DataTable>
            <FootRow>
              <div>Showing 1 to 1 of 1 entries</div>
              <Pager>Previous<PageNum>1</PageNum>Next</Pager>
            </FootRow>
          </TableBlock>
        </Page>
        <Gutter />
        <VScroll>
          <ArrowBtn><Tri dir="up" /></ArrowBtn>
          <ScrollThumb />
          <ArrowBtn><Tri dir="down" /></ArrowBtn>
        </VScroll>
      </DocArea>

      <HScroll>
        <HTrack>
          <Tri dir="left" />
          <HThumb />
          <Tri dir="right" />
        </HTrack>
      </HScroll>

      <StatusBar>
        <StatusItem>Page 13 of 20</StatusItem>
        <StatusItem $ml={26} $muted>1287 words</StatusItem>
        <StatusItem $ml={25}><ProofIcon /></StatusItem>
        <StatusItem $ml={21}>English (United States)</StatusItem>
        <StatusItem $ml={26} $gap={1}><AccIcon />Accessibility: Unavailable</StatusItem>
        <StatusItem $ml={909} $gap={2}><FocusIcon />Focus</StatusItem>
        <ViewTab $ml={13}><ReadIcon /></ViewTab>
        <ViewTab $on><PrintIcon /></ViewTab>
        <ViewTab><WebIcon /></ViewTab>
        <StatusItem $ml={10}>−</StatusItem>
        <StatusItem $ml={8}><ZoomTrack /></StatusItem>
        <StatusItem $ml={6}>+</StatusItem>
        <StatusItem $ml={15} $muted>180%</StatusItem>
      </StatusBar>

      <Taskbar>
        <Widget>
          <WidgetIcon><CoinsIcon /><Badge>1</Badge></WidgetIcon>
          <WidgetText>USD/INR<WidgetDelta>+0.08%</WidgetDelta></WidgetText>
        </Widget>
        <WindowsLogo />
        <Pill><SearchGlass s={19} c="#222" w={1.8} />Search<PillBook><BookIcon /></PillBook></Pill>
        <AppSlot $ml={3}><AppSquare /></AppSlot>
        <AppSlot><FolderIcon /></AppSlot>
        <AppSlot><HelpIcon /></AppSlot>
        <AppSlot><CopilotIcon /></AppSlot>
        <AppSlot><VSCodeIcon /><RunDot /></AppSlot>
        <AppSlot $active><WordLogo s={30} /><RunDot $on /></AppSlot>
        <AppSlot><WhatsAppIcon /><RunDot /></AppSlot>
        <Tray>
          <svg width="16" height="10" viewBox="0 0 16 10"><path d="M1 9l7-7 7 7" fill="none" stroke="#222" strokeWidth="1.400" /></svg>
          <Lang>ENG<br />IN</Lang>
          <TrayIcons><WifiIcon /><VolumeIcon /><BatteryIcon /></TrayIcons>
          <Clock>09:32<br />08-11-2024</Clock>
          <Bell><BellIcon /></Bell>
        </Tray>
      </Taskbar>
    </Window>
  )
}
